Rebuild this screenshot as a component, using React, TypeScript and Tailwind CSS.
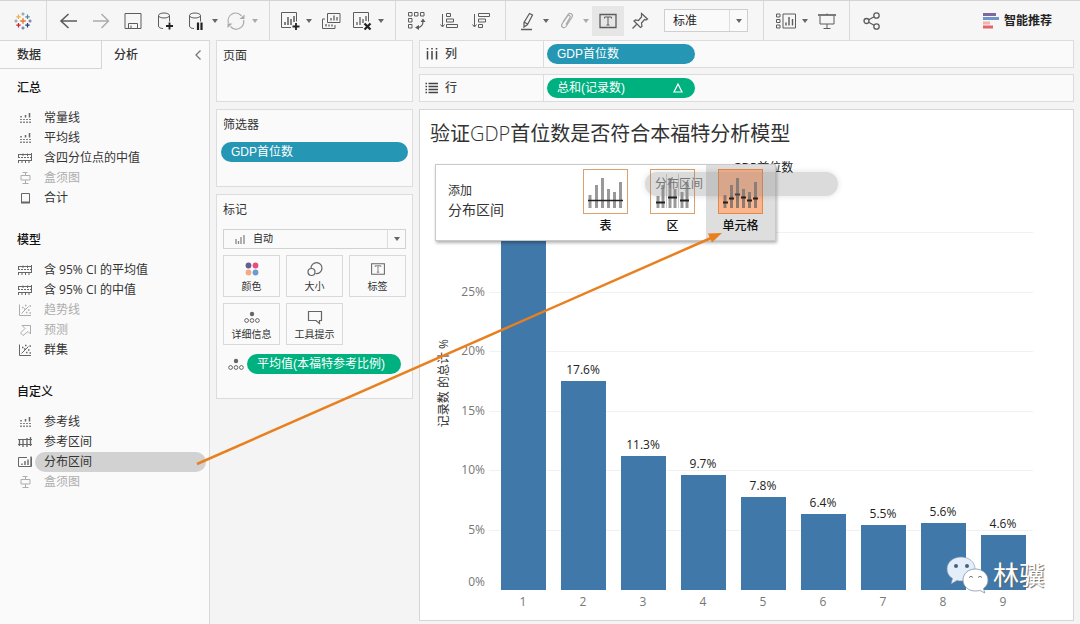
import React from 'react';
import clsx from 'clsx';

interface IconProps {
  size?: string;
  box?: number;
  children: React.ReactNode;
}

const Icon: React.FC<IconProps> = ({ size = 'w-5 h-5', box = 20, children }) => (
  <svg
    viewBox={`0 0 ${box} ${box}`}
    className={clsx('shrink-0', size)}
    fill="none"
    stroke="currentColor"
    aria-hidden="true"
  >
    {children}
  </svg>
);

const Caret = ({ className = 'text-[#666]' }: { className?: string }) => (
  <svg viewBox="0 0 6 4" className={clsx('w-1.5 h-1 shrink-0', className)} aria-hidden="true">
    <path d="M0 0h6L3 4z" fill="currentColor" />
  </svg>
);

// Toolbar icons

const TableauLogo = () => {
  const cross = (x: number, y: number, r: number, color: string, w = 1) => (
    <path d={`M${x - r} ${y}h${r * 2}M${x} ${y - r}v${r * 2}`} stroke={color} strokeWidth={w} />
  );
  return (
    <Icon>
      {cross(10, 10, 2.8, '#e8762c', 1.4)}
      {cross(5.5, 5.8, 2.2, '#ebb04a', 1.2)}
      {cross(14.5, 5.8, 2.2, '#59879b', 1.2)}
      {cross(5.5, 14.2, 2.2, '#c72035', 1.2)}
      {cross(14.5, 14.2, 2.2, '#1f457e', 1.2)}
      {cross(10, 3, 1.6, '#7099a6')}
      {cross(10, 17, 1.6, '#5c6692')}
      {cross(3, 10, 1.6, '#7099a6')}
      {cross(17, 10, 1.6, '#5c6692')}
    </Icon>
  );
};

const BackIcon = () => (
  <Icon>
    <path d="M18 10H2M9.500 3L2 10l7.500 7" strokeWidth="1.6" />
  </Icon>
);

const ForwardIcon = () => (
  <Icon>
    <path d="M2 10h15.500M10.500 3l7 7-7 7" strokeWidth="1.4" />
  </Icon>
);

const SaveIcon = () => (
  <Icon>
    <path d="M2 2.500h16v15H2zM5.500 17.500v-5h9v5M8 17v-2.500" />
  </Icon>
);

const DatabaseShape = () => (
  <>
    <ellipse cx="9" cy="4.500" rx="5.500" ry="2.500" />
    <path d="M3.500 4.500v10.500c0 1.500 2 2.500 4.500 2.500M14.500 4.500v6" />
  </>
);

const DatabaseAddIcon = () => (
  <Icon>
    <DatabaseShape />
    <path d="M14.500 11.500v7M11 15h7" stroke="#222" strokeWidth="1.8" />
  </Icon>
);

const DatabasePauseIcon = () => (
  <Icon>
    <DatabaseShape />
    <path d="M12 11.500v7.500M15.500 11.500v7.500" stroke="#222" strokeWidth="2.2" />
  </Icon>
);

const RefreshIcon = () => (
  <Icon>
    <path d="M2.500 12A7.500 7.500 0 0 1 15.500 5M17.500 9A7.500 7.500 0 0 1 4.500 15.500" strokeWidth="1.2" />
    <path d="M13.500 8h5V3.500zM6.500 12.500h-5V17z" fill="currentColor" stroke="none" />
  </Icon>
);

const NewSheetIcon = () => (
  <Icon>
    <path d="M11 16.500H1.500v-15h15v9" />
    <path d="M5 14v-3M8 14V6M11 14V8M14 11V5" strokeWidth="1.5" />
    <path d="M16 12v7M12.500 15.500h7" stroke="#222" strokeWidth="1.8" />
  </Icon>
);

const DuplicateIcon = () => (
  <Icon>
    <path d="M6.500 2.500h12.500v9H6.500zM4 8H1.500v9.500h12.500V14" />
    <path d="M10 9.500V7M13 9.500V4.500M16 9.500V6M5 15.500V13M8 15.500v-2M11 15.500v-2" strokeWidth="1.3" />
  </Icon>
);

const ClearSheetIcon = () => (
  <Icon>
    <path d="M11 16.500H1.500v-15h15v9" />
    <path d="M5 14v-3M8 14V6M11 12V8M14 10V5" strokeWidth="1.3" />
    <path d="M12.500 12.500l6 6M18.500 12.500l-6 6" stroke="#222" strokeWidth="2.2" />
  </Icon>
);

const SwapIcon = () => (
  <Icon>
    <path d="M1.500 1.500H5V5H1.500zM7.500 1.500H11V5H7.500zM13.500 1.500H17V5h-3.500zM1.500 7.500H5V11H1.500zM1.500 13.500H5V17H1.500z" />
    <path d="M10 16.500c4 0 6-2 6-6" strokeWidth="1.2" />
    <path d="M13.500 11L16 7.500l2.500 3.500zM12 14l-4 2.500 4 2.500z" fill="currentColor" stroke="none" />
  </Icon>
);

const SortAscIcon = () => (
  <Icon>
    <path d="M3.500 3v12M1.500 13.500l2 2.500 2-2.500M7.500 2.500h4v3h-4zM7.500 8h7v3h-7zM7.500 13.500h11v3h-11z" />
  </Icon>
);

const SortDescIcon = () => (
  <Icon>
    <path d="M3.500 3v12M1.500 13.500l2 2.500 2-2.500M7.500 2.500h11v3h-11zM7.500 8h7v3h-7zM7.500 13.500h4v3h-4z" />
  </Icon>
);

const HighlighterIcon = () => (
  <Icon>
    <path d="M12.500 2.500l3 1.500-5 9.500L7 16v-4.500zM7 11l3.500 2" strokeWidth="1.2" />
    <path d="M4 18.500h11" strokeWidth="1.5" />
  </Icon>
);

const PaperclipIcon = () => (
  <Icon>
    <path d="M9 13.500l4-7c1-2-1.500-3-2.500-1.500L5 13c-1.500 3 2 5 4 2.500l6-9.500c1.500-3-2-5-4-2.500L6 11" strokeWidth="1.2" />
  </Icon>
);

const TextBoxIcon = ({ size }: { size?: string }) => (
  <Icon size={size}>
    <path d="M2 3.500h16v13H2z" strokeWidth="1.3" />
    <path d="M6.500 7.500V6h7v1.500M10 6v8M8.500 14h3" />
  </Icon>
);

const PinIcon = () => (
  <Icon>
    <path
      d="M11.500 2.500l6 5.500-1.500 1-1.500-.5-3 3.500.5 3.500-1.500 1L4 10l1.500-1 3 .5 3-3.500zM6.500 13.500l-4 4"
      strokeWidth="1.2"
    />
  </Icon>
);

const ShowCardsIcon = () => (
  <Icon>
    <path d="M.5 3H4v3H.5zM.5 8.500H4v3H.5zM.5 14H4v3H.5zM7 3h12.500v14H7z" />
    <path d="M10 14.500v-3M13 14.500V6M16.500 14.500V8" strokeWidth="1.4" />
  </Icon>
);

const PresentIcon = () => (
  <Icon>
    <path d="M1 4h18" strokeWidth="1.6" />
    <path d="M3 5v8h14V5M10 2.500V4M10 13v4.500M6.500 17.500h7" />
  </Icon>
);

const ShareIcon = () => (
  <Icon>
    <circle cx="4.500" cy="10" r="2.500" strokeWidth="1.3" />
    <circle cx="14.500" cy="4.500" r="2.700" strokeWidth="1.3" />
    <circle cx="14.500" cy="15.500" r="2.700" strokeWidth="1.3" />
    <path d="M6.700 8.800l5.400-3M6.700 11.200l5.400 3" strokeWidth="1.3" />
  </Icon>
);

const ShowMeIcon = () => (
  <Icon size="w-4 h-4" box={16}>
    <path d="M0 1.500h13" stroke="#7a6a9b" strokeWidth="3" />
    <path d="M0 5.500h16" stroke="#6f95cc" strokeWidth="3" />
    <path d="M0 10h7" stroke="#f3b3a5" strokeWidth="3" />
    <path d="M0 14h10" stroke="#e0656f" strokeWidth="3" />
  </Icon>
);

// Analytics pane icons

const LineIcon = () => (
  <Icon size="w-4 h-4" box={16}>
    <path d="M3 9.500h11" strokeDasharray="2 1" strokeOpacity=".8" />
    <path d="M4 7.500V6M8.500 7.500V5M12.500 7.500V3" strokeWidth="1.5" />
    <path d="M4 13v-1.500M7 13v-1.500M10 13v-1.500M13 13v-1.500" strokeWidth="1.5" />
  </Icon>
);

const MedianIcon = () => (
  <Icon size="w-4 h-4" box={16}>
    <path d="M1 4.500h14M1 10.500h14" />
    <path d="M1 7.500h14" strokeDasharray="2 1" />
    <path d="M1.500 8V4M6 6V3.500M10.500 6V3.500M14.500 11V3M1.500 13v-2M5 13v-2M8.500 13v-2M12 13v-2" />
  </Icon>
);

const BoxPlotIcon = () => (
  <Icon size="w-4 h-4" box={16}>
    <path d="M5.500 2.500h5M8.500 2.500V5M4 5.500h9v4.500H4zM8.500 10v3.500M5.500 13.500h6" />
  </Icon>
);

const TotalsIcon = () => (
  <Icon size="w-4 h-4" box={16}>
    <path d="M4.500 3.500h8v9h-8z" />
    <path d="M4 12.500h9" strokeWidth="2" />
  </Icon>
);

const ScatterIcon = () => (
  <Icon size="w-4 h-4" box={16}>
    <path d="M2.500 2.500v11h11.500M4.500 11.500l7-7" />
    <path d="M5 5.500h1.500M8 3.500h1.500M7 7h1.500M11 8h1.500M9 10.500h1.500M12.500 11H14M12.500 4H14" strokeWidth="1.3" />
  </Icon>
);

const ForecastIcon = () => (
  <Icon size="w-4 h-4" box={16}>
    <path d="M5 3.500h8.500V12l-2.500-2.500-5 4L3.500 11l4.500-4.500z" />
  </Icon>
);

const BandIcon = () => (
  <Icon size="w-4 h-4" box={16}>
    <path d="M1 5.500h14M1 10.500h14" />
    <path d="M2.500 12V6M6 13V5M10 13V4M13.500 12V3" strokeWidth="1.3" />
  </Icon>
);

const DistributionIcon = () => (
  <Icon size="w-4 h-4" box={16}>
    <path d="M10 3.500H1.500v9h13v-9" />
    <path d="M5 11V9.500M8 11V7M11 11V5.500M14 12V2.500" strokeWidth="1.4" />
  </Icon>
);

// Marks card icons

const ColorIcon = () => (
  <Icon size="w-4 h-4" box={16}>
    <g stroke="none">
      <circle cx="4.500" cy="4.500" r="2.900" fill="#6b5b95" />
      <circle cx="11.500" cy="4.500" r="2.900" fill="#e8507a" />
      <circle cx="4.500" cy="11.500" r="2.900" fill="#f2ac83" />
      <circle cx="11.500" cy="11.500" r="2.900" fill="#6b9bd1" />
    </g>
  </Icon>
);

const SizeIcon = () => (
  <Icon size="w-4 h-4" box={16}>
    <path d="M4 7.500a5.500 5.500 0 1 1 4.500 5" strokeWidth="1.2" />
    <circle cx="4.500" cy="11" r="3.500" strokeWidth="1.2" />
  </Icon>
);

const DetailIcon = () => (
  <Icon size="w-4 h-4" box={16}>
    <circle cx="8" cy="5" r="2.200" fill="currentColor" stroke="none" />
    <circle cx="2.600" cy="11.500" r="1.900" />
    <circle cx="8" cy="11.500" r="1.900" />
    <circle cx="13.400" cy="11.500" r="1.900" />
  </Icon>
);

const TooltipIcon = () => (
  <Icon size="w-4 h-4" box={16}>
    <path d="M1.500 2.500h13v9h-2v3l-3.500-3H1.500z" strokeWidth="1.2" />
  </Icon>
);

interface ToolButtonProps {
  label: string;
  caret?: boolean;
  disabled?: boolean;
  active?: boolean;
  children: React.ReactNode;
}

const ToolButton: React.FC<ToolButtonProps> = ({ label, caret, disabled, active, children }) => (
  <button
    aria-label={label}
    disabled={disabled}
    className={clsx(
      'flex items-center h-[30px]',
      caret ? 'w-10 pl-[5px] gap-1.5' : 'w-8 justify-center',
      disabled ? 'text-[#aaa]' : 'text-[#5c5c5c]',
      active && 'bg-[#e6e6e6]'
    )}
  >
    {children}
    {caret && <Caret className={disabled ? 'text-[#aaa]' : 'text-[#666]'} />}
  </button>
);

const Toolbar = () => (
  <header className="flex h-10 border-t border-[#d4d4d4] bg-[#f6f6f6]">
    <div className="flex items-center justify-center w-[47px] border-r border-[#d9d9d9]">
      <TableauLogo />
    </div>
    <div className="flex items-center pl-1.5 pr-2 border-r border-[#d9d9d9]">
      <ToolButton label="后退"><BackIcon /></ToolButton>
      <ToolButton label="前进" disabled><ForwardIcon /></ToolButton>
      <ToolButton label="保存"><SaveIcon /></ToolButton>
      <ToolButton label="新建数据源"><DatabaseAddIcon /></ToolButton>
      <ToolButton label="暂停自动更新" caret><DatabasePauseIcon /></ToolButton>
      <ToolButton label="运行更新" caret disabled><RefreshIcon /></ToolButton>
    </div>
    <div className="flex items-center pl-[5px] pr-2 border-r border-[#d9d9d9]">
      <ToolButton label="新建工作表" caret><NewSheetIcon /></ToolButton>
      <ToolButton label="复制"><DuplicateIcon /></ToolButton>
      <ToolButton label="清除工作表" caret><ClearSheetIcon /></ToolButton>
    </div>
    <div className="flex items-center pl-[5px] pr-2 border-r border-[#d9d9d9]">
      <ToolButton label="交换行和列"><SwapIcon /></ToolButton>
      <ToolButton label="升序排序"><SortAscIcon /></ToolButton>
      <ToolButton label="降序排序"><SortDescIcon /></ToolButton>
    </div>
    <div className="flex items-center pl-1.5 pr-[15px] border-r border-[#d9d9d9]">
      <ToolButton label="突出显示" caret><HighlighterIcon /></ToolButton>
      <ToolButton label="组成员" caret disabled><PaperclipIcon /></ToolButton>
      <ToolButton label="显示标记标签" active><TextBoxIcon /></ToolButton>
      <ToolButton label="固定轴"><PinIcon /></ToolButton>
      <div className="relative flex ml-2">
        <select
          aria-label="适合"
          className="appearance-none w-[84px] h-[23px] pl-2 border border-[#cfcfcf] bg-[#fafafa] text-xs text-[#222]"
        >
          <option>标准</option>
        </select>
        <span className="absolute inset-y-px right-px w-[18px] flex items-center justify-center border-l border-[#ddd] pointer-events-none">
          <Caret />
        </span>
      </div>
    </div>
    <div className="flex items-center pl-[7px] pr-1.5 border-r border-[#d9d9d9]">
      <ToolButton label="显示/隐藏卡" caret><ShowCardsIcon /></ToolButton>
      <ToolButton label="演示模式"><PresentIcon /></ToolButton>
    </div>
    <div className="flex items-center pl-1.5">
      <ToolButton label="共享"><ShareIcon /></ToolButton>
    </div>
    <button className="flex items-center gap-[5px] ml-auto mr-7 text-xs font-bold text-[#222]">
      <ShowMeIcon />
      智能推荐
    </button>
  </header>
);

interface AnalyticsItem {
  label: string;
  icon: React.ReactNode;
  disabled?: boolean;
  selected?: boolean;
}

const sections: { title: string; items: AnalyticsItem[] }[] = [
  {
    title: '汇总',
    items: [
      { label: '常量线', icon: <LineIcon /> },
      { label: '平均线', icon: <LineIcon /> },
      { label: '含四分位点的中值', icon: <MedianIcon /> },
      { label: '盒须图', icon: <BoxPlotIcon />, disabled: true },
      { label: '合计', icon: <TotalsIcon /> },
    ],
  },
  {
    title: '模型',
    items: [
      { label: '含 95% CI 的平均值', icon: <MedianIcon /> },
      { label: '含 95% CI 的中值', icon: <MedianIcon /> },
      { label: '趋势线', icon: <ScatterIcon />, disabled: true },
      { label: '预测', icon: <ForecastIcon />, disabled: true },
      { label: '群集', icon: <ScatterIcon /> },
    ],
  },
  {
    title: '自定义',
    items: [
      { label: '参考线', icon: <LineIcon /> },
      { label: '参考区间', icon: <BandIcon /> },
      { label: '分布区间', icon: <DistributionIcon />, selected: true },
      { label: '盒须图', icon: <BoxPlotIcon />, disabled: true },
    ],
  },
];

const AnalyticsPane = () => (
  <aside className="w-[210px] shrink-0 border-r border-[#d9d9d9] bg-[#fafafa] font-['Open_Sans','Noto_Sans_CJK_SC',sans-serif]">
    <div className="flex h-[29px] leading-7 font-medium">
      <button className="w-[102px] pl-[17px] text-left border-r border-b border-t border-[#d6d6d6]">
        数据
      </button>
      <div className="flex flex-1 items-center justify-between pl-3 pr-2 border-t border-[#d6d6d6]">
        <button>分析</button>
        <button aria-label="折叠" className="text-[#777]">
          <svg viewBox="0 0 6 10" className="w-1.5 h-2.5" fill="none" stroke="currentColor" strokeWidth="1.3">
            <path d="M5.500 .5L1 5l4.500 4.500" />
          </svg>
        </button>
      </div>
    </div>
    <div className="flex flex-col gap-[22px] pt-[9px]">
      {sections.map((section) => (
        <section key={section.title}>
          <h2 className="pl-[17px] mb-2.5 leading-5 font-medium text-[#111]">{section.title}</h2>
          <ul>
            {section.items.map((item) => (
              <li key={item.label}>
                <button
                  disabled={item.disabled}
                  className={clsx(
                    'flex items-center w-full h-5 pl-[17px] pr-[3px] text-left',
                    item.disabled ? 'text-[#adadad]' : 'text-[#333]'
                  )}
                >
                  <span className={item.disabled ? 'text-[#adadad]' : 'text-[#666]'}>{item.icon}</span>
                  <span
                    className={clsx(
                      'flex-1 ml-0.5 px-[9px] leading-5 rounded-full',
                      item.selected && 'bg-[#d2d2d2]'
                    )}
                  >
                    {item.label}
                  </span>
                </button>
              </li>
            ))}
          </ul>
        </section>
      ))}
    </div>
  </aside>
);

const markButtons = [
  { label: '颜色', icon: <ColorIcon /> },
  { label: '大小', icon: <SizeIcon /> },
  { label: '标签', icon: <TextBoxIcon size="w-4 h-4" /> },
  { label: '详细信息', icon: <DetailIcon /> },
  { label: '工具提示', icon: <TooltipIcon /> },
];

const CardsColumn = () => (
  <div className="flex flex-col gap-[7px] w-[197px] shrink-0">
    <section className="h-[62px] px-1.5 pt-1.5 border border-[#dcdcdc] bg-[#fafafa]">
      <h2 className="leading-[18px]">页面</h2>
    </section>

    <section className="h-[78px] px-1 pt-1.5 border border-[#dcdcdc] bg-[#fafafa]">
      <h2 className="px-0.5 leading-[18px]">筛选器</h2>
      <button className="block w-full h-5 mt-2 pl-2.5 rounded-full bg-[#2596b3] text-left text-white">
        GDP首位数
      </button>
    </section>

    <section className="px-1.5 pt-1.5 pb-6 border border-[#dcdcdc] bg-[#fafafa]">
      <h2 className="leading-[18px]">标记</h2>
      <div className="relative flex mt-2.5">
        <select
          aria-label="标记类型"
          className="appearance-none w-full h-5 pl-[29px] border border-[#d2d2d2] bg-[#fafafa] text-[10px] text-[#222]"
        >
          <option>自动</option>
        </select>
        <span className="absolute inset-y-0 left-3 flex items-center text-[#888] pointer-events-none">
          <Icon size="w-2.5 h-2.5" box={10}>
            <path d="M1 10V5M3.500 10V7M6 10V3M9 10V1" strokeWidth="1.3" />
          </Icon>
        </span>
        <span className="absolute inset-y-px right-px w-[18px] flex items-center justify-center border-l border-[#ddd] pointer-events-none">
          <Caret />
        </span>
      </div>
      <div className="grid grid-cols-3 gap-1.5 mt-1.5">
        {markButtons.map((mark) => (
          <button
            key={mark.label}
            className="flex flex-col items-center gap-1 h-[42px] pt-[5px] border border-[#d9d9d9] text-[10px] leading-3 text-[#333]"
          >
            <span className="text-[#666]">{mark.icon}</span>
            {mark.label}
          </button>
        ))}
      </div>
      <div className="flex items-center gap-[3px] mt-[9px] pl-[5px] pr-[5px] text-[#666]">
        <DetailIcon />
        <button className="flex-1 h-5 pl-2.5 rounded-full bg-[#00b180] text-left text-white whitespace-nowrap">
          平均值(本福特参考比例)
        </button>
      </div>
    </section>
  </div>
);

interface ShelfProps {
  name: string;
  icon: React.ReactNode;
  children: React.ReactNode;
}

const Shelf: React.FC<ShelfProps> = ({ name, icon, children }) => (
  <div className="flex h-7 border border-[#dcdcdc] bg-[#fafafa]">
    <div className="flex items-center gap-[5px] w-[124px] pl-1 border-r border-[#dcdcdc] font-medium text-[#444]">
      {icon}
      {name}
    </div>
    <div className="flex items-center pl-[3px]">{children}</div>
  </div>
);

const ColumnsIcon = () => (
  <Icon size="w-4 h-4" box={16}>
    <path d="M3.500 2v1.500M8 2v1.500M12.500 2v1.500M3.500 5v8.500M8 5v8.500M12.500 5v8.500" strokeWidth="1.5" />
  </Icon>
);

const RowsIcon = () => (
  <Icon size="w-4 h-4" box={16}>
    <path
      d="M1.500 3.500H3M1.500 6.500H3M1.500 9.500H3M1.500 12.500H3M4.500 3.500h9.500M4.500 6.500h9.500M4.500 9.500h9.500M4.500 12.500h9.500"
      strokeWidth="1.3"
    />
  </Icon>
);

// Share of records by leading digit, in percent
const bars = [
  { digit: 1, value: 30.3 },
  { digit: 2, value: 17.6 },
  { digit: 3, value: 11.3 },
  { digit: 4, value: 9.7 },
  { digit: 5, value: 7.8 },
  { digit: 6, value: 6.4 },
  { digit: 7, value: 5.5 },
  { digit: 8, value: 5.6 },
  { digit: 9, value: 4.6 },
];

const ticks = [5, 10, 15, 20, 25, 30];
const PX_PER_PERCENT = 11.9;

const BarChart = () => (
  <div className="flex mt-3 pb-1.5 pr-10">
    <div className="flex items-center w-[73px] h-[430px] pl-4 pt-4 shrink-0">
      <span className="leading-4 whitespace-nowrap rotate-180 [writing-mode:vertical-rl] [text-orientation:sideways] text-[#333]">
        记录数 的总计 %
      </span>
    </div>
    <div className="flex-1">
      <div className="h-3.5 leading-4 text-center text-[#222]">GDP首位数</div>
      <div className="relative grid grid-cols-9 items-end h-[416px]">
        {ticks.map((tick) => (
          <div
            key={tick}
            className="absolute -left-1 right-0 h-px bg-[#f1f1f1]"
            style={{ bottom: tick * PX_PER_PERCENT }}
          >
            {tick < 30 && (
              <span className="absolute right-full -top-2 mr-1 leading-4 text-[#777]">{tick}%</span>
            )}
          </div>
        ))}
        <span className="absolute right-full bottom-0 mr-2 leading-4 text-[#777]">0%</span>
        {bars.map((bar) => (
          <div key={bar.digit} className="relative flex flex-col items-center">
            {bar.digit > 1 && <span className="mb-[3px] leading-4 text-[#222]">{bar.value}%</span>}
            <div
              className="w-3/4 bg-[#4178aa]"
              style={{ height: Math.round(bar.value * PX_PER_PERCENT) }}
            />
          </div>
        ))}
      </div>
      <div className="grid grid-cols-9 h-6 leading-6 text-center text-[#777]">
        {bars.map((bar) => (
          <span key={bar.digit}>{bar.digit}</span>
        ))}
      </div>
    </div>
  </div>
);

const TableScope = () => (
  <Icon size="w-[43px] h-[43px]" box={43}>
    <path d="M6 38V25M12.500 38V15M18.500 38V8M24.500 38V19M30.500 38V22M36.500 38V12" stroke="#999" strokeWidth="3" />
    <path d="M4 30.500h35" stroke="#222" strokeWidth="1.5" />
  </Icon>
);

const PaneScope = () => (
  <Icon size="w-[43px] h-[43px]" box={43}>
    <path d="M7 38V26M12 38V15M19 38V8M24 38V19M31 38V22M36 38V12" stroke="#999" strokeWidth="3" />
    <path d="M15.500 4v34M27.500 4v34" stroke="#ccc" />
    <path d="M5 32.500h9M17 27.500h9M29 30.500h9" stroke="#222" strokeWidth="2" />
  </Icon>
);

const CellScope = () => (
  <Icon size="w-[43px] h-[43px]" box={43}>
    <path d="M6 38V25M12.500 38V15M18.500 38V8M24.500 38V19M30.500 38V22M36.500 38V12" stroke="#8d7a70" strokeWidth="3" />
    <path d="M4 32.500h5M10 28.500h5M16 24.500h5M22 27.500h5M28 30.500h5M34 28.500h5" stroke="#222" strokeWidth="2" />
  </Icon>
);

const scopes = [
  { label: '表', icon: <TableScope /> },
  { label: '区', icon: <PaneScope /> },
  { label: '单元格', icon: <CellScope />, hovered: true },
];

const DropTarget = () => (
  <div className="absolute left-[15px] top-[54px] flex w-[341px] h-[77px] border border-[#c9c9c9] bg-white shadow-[1px_2px_3px_rgba(0,0,0,0.3)]">
    <div className="flex-1 pl-3 pt-4 text-[#333]">
      <div className="leading-5">添加</div>
      <div className="text-sm leading-[18px]">分布区间</div>
    </div>
    {scopes.map((scope) => (
      <button
        key={scope.label}
        className={clsx(
          'flex flex-col items-center pt-1 font-medium text-[#111]',
          scope.hovered ? 'w-[69px] bg-[#dedede]' : 'w-[67px]'
        )}
      >
        <span
          className={clsx(
            'border',
            scope.hovered ? 'border-[#e08a50] bg-[#fbb48c]' : 'border-[#dba06c] bg-white'
          )}
        >
          {scope.icon}
        </span>
        <span className="mt-1 leading-4">{scope.label}</span>
      </button>
    ))}
    {/* Item being dragged */}
    <div className="absolute left-[209px] top-[7px] w-[193px] h-6 pl-2.5 leading-6 rounded-full bg-[#888]/30 text-[#777] shadow-[0_0_6px_rgba(0,0,0,0.12)]">
      分布区间
    </div>
  </div>
);

const Watermark = () => (
  <div className="absolute right-7 bottom-[26px] flex items-center gap-[3px] text-white">
    <svg viewBox="0 0 44 38" className="w-11 h-[38px]" aria-hidden="true">
      <path
        d="M15 1C7 1 1 6 1 13c0 4 2 7.500 5.500 9.500L5 28l6-3.500c1.300.4 2.600.5 4 .5 8 0 14-5 14-12S23 1 15 1z"
        fill="#e4eefa"
        stroke="#7d91a8"
        strokeWidth=".6"
      />
      <circle cx="10" cy="10" r="2" fill="#47617c" />
      <circle cx="21" cy="10" r="2" fill="#47617c" />
      <path
        d="M29.500 13C22 13 17 18 17 24s5 11 12.500 11c1.500 0 3-.2 4.300-.6l5 2.600-1.300-4.500C40.500 30.500 42 27.500 42 24c0-6-5.500-11-12.500-11z"
        fill="#fff"
        stroke="#8292a5"
        strokeWidth=".8"
      />
      <path d="M23 21.500q2-2.500 4 0M32 21.500q2-2.500 4 0" fill="none" stroke="#777" />
    </svg>
    <span className="text-[26px] leading-8 [text-shadow:1px_1px_1px_#666]">林骥</span>
  </div>
);

const Worksheet = () => (
  <main className="flex flex-col flex-1 min-w-0">
    <Shelf name="列" icon={<ColumnsIcon />}>
      <button className="w-[148px] h-5 pl-2.5 rounded-full bg-[#2596b3] text-left text-white">
        GDP首位数
      </button>
    </Shelf>
    <div className="mt-1.5">
      <Shelf name="行" icon={<RowsIcon />}>
        <button className="flex items-center justify-between w-[148px] h-5 pl-2.5 pr-3 rounded-full bg-[#00b180] text-white">
          总和(记录数)
          <svg viewBox="0 0 10 10" className="w-2.5 h-2.5" fill="none" stroke="currentColor" strokeWidth="1.2">
            <path d="M5 1l4 8H1z" />
          </svg>
        </button>
      </Shelf>
    </div>
    <section className="relative mt-[7px] border border-[#d6d6d6] bg-white font-['Open_Sans','Noto_Sans_CJK_SC',sans-serif]">
      <h1 className="pl-2.5 pt-2.5 text-xl leading-7 text-[#333]">
        验证<span className="font-light">GDP</span>首位数是否符合本福特分析模型
      </h1>
      <BarChart />
      <DropTarget />
      <Watermark />
    </section>
  </main>
);

// Runs from the selected pane item to the drop target
const DragArrow = () => (
  <svg
    viewBox="0 0 530 240"
    className="absolute left-[196px] top-[228px] w-[530px] h-60 pointer-events-none"
    aria-hidden="true"
  >
    <path d="M1 236L515 10" stroke="#e8801f" strokeWidth="2.5" fill="none" />
    <path d="M526 5L516 14.500L512 5.500z" fill="#e8801f" />
  </svg>
);

const App = () => (
  <div className="relative flex flex-col min-h-screen bg-[#f4f4f4] text-xs text-[#333] font-['Liberation_Sans','Noto_Sans_CJK_SC',sans-serif]">
    <Toolbar />
    <div className="flex flex-1">
      <AnalyticsPane />
      <div className="flex flex-1 items-start gap-1.5 min-w-0 px-1.5">
        <CardsColumn />
        <Worksheet />
      </div>
    </div>
    <DragArrow />
  </div>
);

export default App;
